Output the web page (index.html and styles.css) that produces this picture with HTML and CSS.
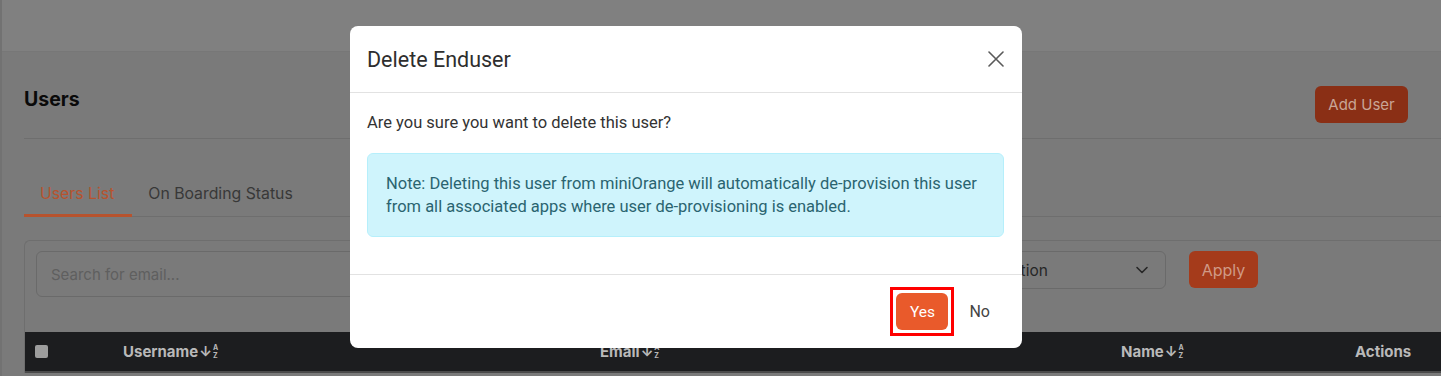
FILE: index.html
```html
<!DOCTYPE html>
<html lang="en">
<head>
<meta charset="utf-8">
<title>Users - Delete Enduser</title>
<link rel="stylesheet" href="styles.css">
</head>
<body>
<div class="page">
  <header class="topbar"></header>
  <main class="main">
    <div class="page-head">
      <h1 class="page-title">Users</h1>
      <button class="btn-add">Add User</button>
    </div>
    <nav class="tabs">
      <a class="tab active">Users List</a>
      <a class="tab">On Boarding Status</a>
    </nav>
    <section class="card">
      <div class="filters">
        <div class="search">Search for email...</div>
        <div class="spacer"></div>
        <div class="select">
          <span>Select Action</span>
          <svg class="chev" width="14" height="14" viewBox="0 0 14 14"><path d="M2 4.5l5 5 5-5" fill="none" stroke="#262626" stroke-width="1.6" stroke-linecap="round" stroke-linejoin="round"/></svg>
        </div>
        <button class="btn-apply">Apply</button>
      </div>
      <div class="thead">
        <div class="th th-check"><span class="checkbox"></span></div>
        <div class="th">Username<span class="sort"><span class="arr">↓</span><span class="az"><span>A</span><span>Z</span></span></span></div>
        <div class="th">Email<span class="sort"><span class="arr">↓</span><span class="az"><span>A</span><span>Z</span></span></span></div>
        <div class="th">Name<span class="sort"><span class="arr">↓</span><span class="az"><span>A</span><span>Z</span></span></span></div>
        <div class="th">Actions</div>
      </div>
    </section>
  </main>
</div>

<div class="modal" role="dialog" aria-labelledby="modal-title">
  <div class="modal-header">
    <h2 id="modal-title" class="modal-title">Delete Enduser</h2>
    <button class="close" aria-label="Close">
      <svg width="16" height="16" viewBox="0 0 16 16"><path d="M1 1l14 14M15 1L1 15" stroke="#5a5a5a" stroke-width="1.6" stroke-linecap="round"/></svg>
    </button>
  </div>
  <div class="modal-body">
    <p class="question">Are you sure you want to delete this user?</p>
    <div class="alert">Note: Deleting this user from miniOrange will automatically de-provision this user from all associated apps where user de-provisioning is enabled.</div>
  </div>
  <div class="modal-footer">
    <span class="highlight"><button class="btn-yes">Yes</button></span>
    <button class="btn-no">No</button>
  </div>
</div>
</body>
</html>
```

FILE: styles.css
```css
* { box-sizing: border-box; }
html, body { margin: 0; padding: 0; }
body {
  width: 1441px;
  height: 376px;
  overflow: hidden;
  background: #7a7a7a;
  font-family: Inter, "Liberation Sans", sans-serif;
  position: relative;
}
button { font-family: inherit; border: 0; cursor: pointer; }

.page {
  border-left: 2px solid #727272;
  min-height: 376px;
}
.topbar {
  height: 52px;
  background: #808080;
  border-bottom: 1px solid #777777;
}
.main {
  padding-left: 22px;
}
.page-head {
  display: flex;
  justify-content: space-between;
  align-items: flex-start;
  padding-top: 33px;
  padding-bottom: 15px;
  border-bottom: 1px solid #6e6e6e;
}
.page-title {
  margin: 1px 0 0 0;
  font-size: 19.5px;
  line-height: 26px;
  font-weight: 700;
  color: #0a0a0a;
}
.btn-add {
  margin-right: 33px;
  margin-top: 1px;
  width: 93px;
  height: 37px;
  border-radius: 6px;
  background: #8a2f15;
  color: #c9a596;
  font-size: 15px;
}
.tabs {
  display: flex;
  margin-top: 35px;
  border-bottom: 1px solid #6e6e6e;
}
.tab {
  font-size: 15.8px;
  line-height: 20px;
  padding: 10px 18px 10px 16px;
  color: #383838;
  border-bottom: 3px solid transparent;
  margin-bottom: -1px;
}
.tab + .tab { padding-left: 16px; }
.tab.active {
  color: #b7532e;
  border-bottom-color: #b7532e;
}
.card {
  margin-top: 23px;
  border: 1px solid #6e6e6e;
  border-right: 0;
  border-bottom: 0;
  border-top-left-radius: 6px;
  padding-top: 10px;
}
.filters {
  display: flex;
  align-items: flex-start;
  padding: 0 11px;
  height: 46px;
}
.search {
  width: 500px;
  height: 46px;
  border: 1px solid #6a6a6a;
  border-radius: 6px;
  padding: 0 14px;
  display: flex;
  align-items: center;
  font-size: 15px;
  color: #5f5f5f;
}
.spacer { flex: 1; }
.select {
  width: 230px;
  height: 38px;
  border: 1px solid #6a6a6a;
  border-radius: 6px;
  display: flex;
  align-items: center;
  justify-content: space-between;
  padding: 0 16px 0 14px;
  font-size: 15.5px;
  color: #262626;
}
.btn-apply {
  margin-left: 23px;
  margin-right: 172px;
  width: 69px;
  height: 37px;
  border-radius: 6px;
  background: #a53b1b;
  color: #d09a86;
  font-size: 16px;
}
.thead {
  margin-top: 35px;
  height: 41px;
  background: #1c1d1f;
  display: grid;
  grid-template-columns: 99px 477px 521px 234px 1fr;
  align-items: center;
  border-bottom: 2px solid #4a4a4a;
}
.th {
  display: flex;
  align-items: center;
  font-size: 15px;
  font-weight: 700;
  color: #b9b9b9;
  margin-left: -1px;
}
.th-check { padding-left: 10px; margin-left: 0; }
.checkbox {
  width: 13px;
  height: 13px;
  border-radius: 2px;
  background: #9d9d9d;
}
.sort {
  display: inline-flex;
  align-items: center;
  margin-left: 1px;
}
.arr {
  font-size: 14px;
  line-height: 16px;
  font-weight: 700;
}
.az {
  display: inline-flex;
  flex-direction: column;
  font-size: 7px;
  line-height: 8px;
  font-weight: 700;
  margin-left: 1px;
}

/* Modal */
.modal {
  position: absolute;
  left: 350px;
  top: 26px;
  width: 672px;
  height: 322px;
  background: #ffffff;
  border-radius: 8px;
  font-family: Roboto, "Liberation Sans", sans-serif;
  color: #333333;
  overflow: hidden;
}
.modal-header {
  height: 67px;
  display: flex;
  align-items: center;
  justify-content: space-between;
  padding: 0 18px 0 17px;
  border-bottom: 1px solid #e2e2e2;
}
.modal-title {
  margin: 0;
  font-size: 21.5px;
  font-weight: 400;
  color: #2e2e2e;
}
.close {
  background: none;
  padding: 0;
  width: 16px;
  height: 16px;
  display: flex;
}
.modal-body {
  padding: 18px 18px 37px 17px;
  border-bottom: 1px solid #e2e2e2;
}
.question {
  margin: 0 0 18px 0;
  font-size: 16.5px;
  line-height: 24px;
}
.alert {
  background: #cff4fc;
  border: 1px solid #b6effb;
  border-radius: 6px;
  padding: 18px 18px 18px 18px;
  font-size: 16.5px;
  line-height: 23px;
  color: #2a6470;
}
.modal-footer {
  display: flex;
  justify-content: flex-end;
  align-items: center;
  padding: 12px 20px 0 0;
}
.highlight {
  display: inline-flex;
  border: 3px solid #ff0000;
  padding: 3px;
}
.btn-yes {
  width: 52px;
  height: 37px;
  border-radius: 6px;
  background: #e95a2b;
  color: #ffffff;
  font-family: Roboto, "Liberation Sans", sans-serif;
  font-size: 15.5px;
}
.btn-no {
  background: none;
  padding: 0 12px 0 15px;
  font-family: Roboto, "Liberation Sans", sans-serif;
  font-size: 16px;
  color: #444444;
}
```
